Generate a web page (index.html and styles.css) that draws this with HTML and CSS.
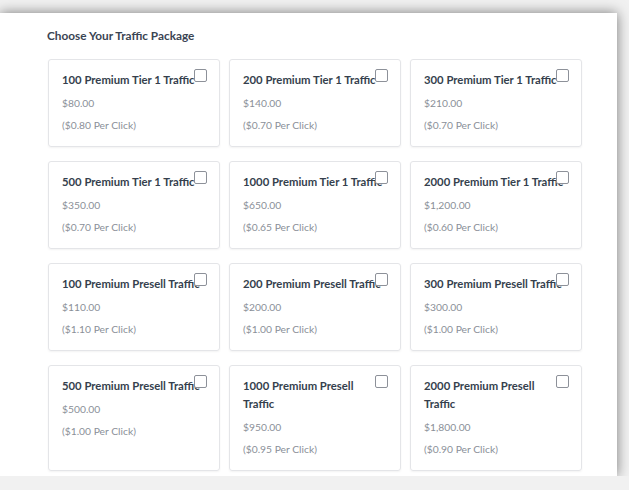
FILE: index.html
```html
<!DOCTYPE html>
<html lang="en">
<head>
    <meta charset="UTF-8">
    <meta name="viewport" content="width=device-width, initial-scale=1.0">
    <title>Choose Your Traffic Package</title>
    <link rel="stylesheet" href="styles.css">
</head>
<body>

<div class="panel">
    <div class="panel-title">Choose Your Traffic Package</div>
    <div class="packages">
        <label class="package">
            <div class="package-name">100 Premium Tier 1 Traffic</div>
            <div class="package-price">$80.00</div>
            <div class="package-rate">($0.80 Per Click)</div>
            <input type="checkbox" class="package-check">
        </label>
        <label class="package">
            <div class="package-name">200 Premium Tier 1 Traffic</div>
            <div class="package-price">$140.00</div>
            <div class="package-rate">($0.70 Per Click)</div>
            <input type="checkbox" class="package-check">
        </label>
        <label class="package">
            <div class="package-name">300 Premium Tier 1 Traffic</div>
            <div class="package-price">$210.00</div>
            <div class="package-rate">($0.70 Per Click)</div>
            <input type="checkbox" class="package-check">
        </label>

        <label class="package">
            <div class="package-name">500 Premium Tier 1 Traffic</div>
            <div class="package-price">$350.00</div>
            <div class="package-rate">($0.70 Per Click)</div>
            <input type="checkbox" class="package-check">
        </label>
        <label class="package">
            <div class="package-name">1000 Premium Tier 1 Traffic</div>
            <div class="package-price">$650.00</div>
            <div class="package-rate">($0.65 Per Click)</div>
            <input type="checkbox" class="package-check">
        </label>
        <label class="package">
            <div class="package-name">2000 Premium Tier 1 Traffic</div>
            <div class="package-price">$1,200.00</div>
            <div class="package-rate">($0.60 Per Click)</div>
            <input type="checkbox" class="package-check">
        </label>

        <label class="package">
            <div class="package-name">100 Premium Presell Traffic</div>
            <div class="package-price">$110.00</div>
            <div class="package-rate">($1.10 Per Click)</div>
            <input type="checkbox" class="package-check">
        </label>
        <label class="package">
            <div class="package-name">200 Premium Presell Traffic</div>
            <div class="package-price">$200.00</div>
            <div class="package-rate">($1.00 Per Click)</div>
            <input type="checkbox" class="package-check">
        </label>
        <label class="package">
            <div class="package-name">300 Premium Presell Traffic</div>
            <div class="package-price">$300.00</div>
            <div class="package-rate">($1.00 Per Click)</div>
            <input type="checkbox" class="package-check">
        </label>

        <label class="package">
            <div class="package-name">500 Premium Presell Traffic</div>
            <div class="package-price">$500.00</div>
            <div class="package-rate">($1.00 Per Click)</div>
            <input type="checkbox" class="package-check">
        </label>
        <label class="package">
            <div class="package-name">1000 Premium Presell Traffic</div>
            <div class="package-price">$950.00</div>
            <div class="package-rate">($0.95 Per Click)</div>
            <input type="checkbox" class="package-check">
        </label>
        <label class="package">
            <div class="package-name">2000 Premium Presell Traffic</div>
            <div class="package-price">$1,800.00</div>
            <div class="package-rate">($0.90 Per Click)</div>
            <input type="checkbox" class="package-check">
        </label>
    </div>
</div>

</body>
</html>
```

FILE: styles.css
```css
body {
    margin: 0;
    background: #f1f1f1;
    font-family: 'Lato', 'Liberation Sans', sans-serif;
    overflow: hidden;
}
.panel {
    margin-top: 13px;
    width: 570px;
    height: 463px;
    padding: 0 0 0 47px;
    background: #fff;
    box-shadow: 0 0 12px rgba(0, 0, 0, 0.5);
    box-sizing: content-box;
}
.panel-title {
    padding-top: 16px;
    height: 30px;
    font-size: 11.8px;
    font-weight: 700;
    line-height: 14px;
    color: #3a4453;
}
.packages {
    display: grid;
    grid-template-columns: repeat(3, 172px);
    column-gap: 9px;
    row-gap: 14px;
    padding-left: 1px;
}
.package {
    position: relative;
    display: block;
    padding: 11px 13px 10px;
    border: 1px solid #e4e5e8;
    border-radius: 3px;
    box-shadow: 0 1px 2px rgba(0, 0, 0, 0.05);
}
.package-name {
    font-size: 11.3px;
    font-weight: 700;
    line-height: 18px;
    color: #353f4d;
    margin-bottom: 3px;
}
.package-price,
.package-rate {
    font-size: 10.3px;
    line-height: 22px;
    color: #8a8f98;
}
.package-check {
    position: absolute;
    top: 9px;
    right: 12px;
    width: 13px;
    height: 13px;
    margin: 0;
    appearance: none;
    border: 1px solid #8d9199;
    border-radius: 2px;
    background: #fff;
}
```
